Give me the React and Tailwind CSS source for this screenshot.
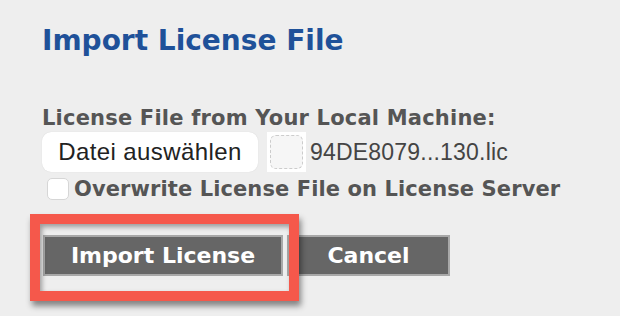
export default function App() {
  return (
    <div className="w-[620px] h-[316px] bg-[#eeeeee] overflow-hidden relative font-['DejaVu_Sans',sans-serif]">
      <div className="pl-[42px] pt-[24px]">
        <h1 className="text-[28px] leading-[34px] font-bold text-[#1f5199]">
          Import License File
        </h1>

        <div className="mt-[48px] text-[21px] leading-[24px] font-bold text-[#555555] tracking-[0.2px]">
          License File from Your Local Machine:
        </div>

        <div className="flex items-center mt-[2px]">
          <button
            type="button"
            className="h-[40px] w-[216px] rounded-[9px] bg-white text-[#222222] text-[24px] tracking-[0.4px] font-['Liberation_Sans',sans-serif] shadow-[0_0_1px_rgba(0,0,0,0.15)]"
          >
            Datei auswählen
          </button>
          {/* empty file icon */}
          <div className="ml-[9px] w-[39px] h-[40px] bg-white p-[3px]">
            <div className="w-full h-full rounded-[6px] border border-dashed border-[#cccccc] bg-[#f6f6f6]" />
          </div>
          <span className="ml-[4px] text-[23px] tracking-[0.2px] text-[#444444] font-['Liberation_Sans',sans-serif]">
            94DE8079...130.lic
          </span>
        </div>

        <label className="flex items-center mt-[5px] ml-[5px]">
          <span className="w-[22px] h-[22px] rounded-[5px] bg-white border border-[#d6d6d6]" />
          <span className="ml-[5px] text-[21px] leading-[24px] font-bold text-[#555555] tracking-[0.1px]">
            Overwrite License File on License Server
          </span>
        </label>

        <div className="flex mt-[34px] ml-[1px] gap-[4px]">
          <button
            type="button"
            className="w-[240px] h-[41px] bg-[#666666] border-2 border-[#a8a8a8] text-white text-[22px] font-bold"
          >
            Import License
          </button>
          <button
            type="button"
            className="w-[163px] h-[41px] bg-[#666666] border-2 border-[#a8a8a8] text-white text-[22px] font-bold"
          >
            Cancel
          </button>
        </div>
      </div>

      {/* highlight annotation */}
      <div className="absolute left-[30px] top-[214px] w-[269px] h-[87px] border-[10px] border-[#f5584b] shadow-[2px_5px_6px_rgba(0,0,0,0.45),inset_2px_3px_5px_rgba(0,0,0,0.35)]" />
    </div>
  );
}
